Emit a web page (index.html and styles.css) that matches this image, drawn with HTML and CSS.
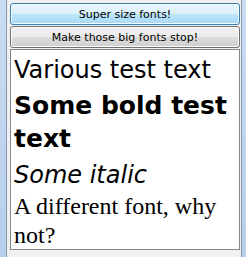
FILE: index.html
```html
<!DOCTYPE html>
<html>
<head>
<meta charset="utf-8">
<link rel="stylesheet" href="styles.css">
</head>
<body>
<div class="frame">
  <div class="client">
    <button class="btn btn-hover">Super size fonts!</button>
    <button class="btn">Make those big fonts stop!</button>
    <div class="panel">
      <div class="t regular">Various test text</div>
      <div class="t bold">Some bold test text</div>
      <div class="t italic">Some italic</div>
      <div class="t serif">A different font, why not?</div>
    </div>
  </div>
</div>
</body>
</html>
```
FILE: styles.css
```css
html, body {
  margin: 0;
  padding: 0;
  width: 246px;
  height: 257px;
  overflow: hidden;
}
body {
  background: linear-gradient(to bottom, #c9dcf2, #b7cfec);
}
.frame {
  display: flex;
  height: 257px;
  padding: 0 4px 0 6px;
}
.client {
  flex: 1;
  display: flex;
  flex-direction: column;
  border-left: 1px solid #8797a9;
  border-right: 1px solid #8797a9;
  background: #f0f0f0;
  padding: 3px 1px 0 3px;
  gap: 1px;
}
.btn {
  height: 22px;
  margin: 0;
  padding: 0;
  font-family: "DejaVu Sans", Verdana, sans-serif;
  font-size: 11px;
  color: #000;
  border: 1px solid #707070;
  border-radius: 3px;
  box-shadow: inset 0 0 0 1px #fcfcfc;
  background: linear-gradient(to bottom, #f2f2f2 0%, #ebebeb 50%, #dddddd 50%, #cfcfcf 100%);
}
.btn-hover {
  border-color: #3c7fb1;
  box-shadow: inset 0 0 0 1px #f4fbfe;
  background: linear-gradient(to bottom, #eaf6fd 0%, #d9f0fc 50%, #bee6fd 50%, #a7d9f5 100%);
}
.panel {
  flex: 1;
  margin-bottom: 7px;
  background: #fff;
  border: 1px solid #828790;
  padding: 4px 4px 0 3px;
  overflow: hidden;
}
.t {
  font-size: 24px;
  line-height: 33px;
  color: #000;
}
.regular {
  font-family: "DejaVu Sans", Verdana, sans-serif;
}
.bold {
  font-family: "DejaVu Sans", Verdana, sans-serif;
  font-size: 25px;
  font-weight: bold;
  margin-top: 2px;
}
.italic {
  font-family: "DejaVu Sans", Verdana, sans-serif;
  font-style: italic;
  margin-top: 4px;
}
.serif {
  font-family: "Liberation Serif", "Times New Roman", serif;
  line-height: 28.5px;
}
```
